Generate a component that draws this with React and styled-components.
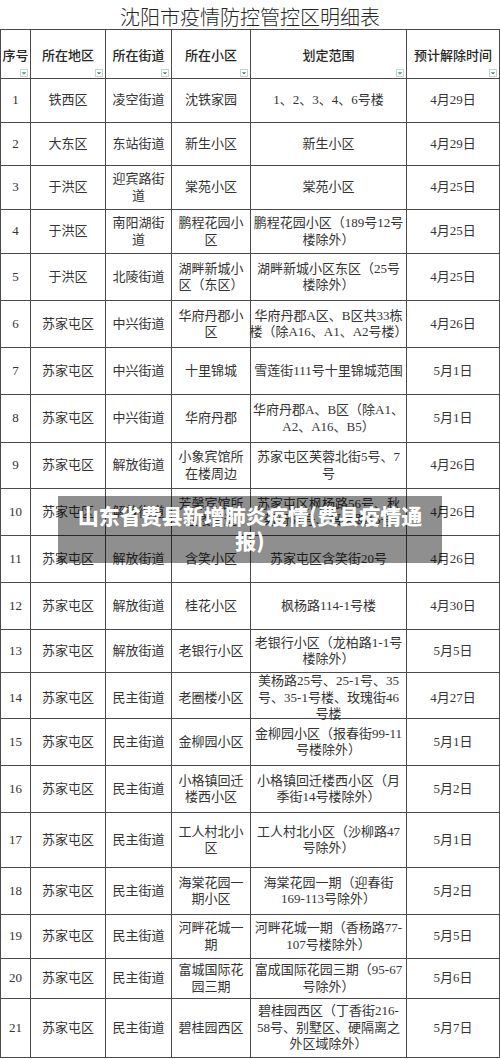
import React from 'react';
import styled, { createGlobalStyle } from 'styled-components';

const GlobalStyle = createGlobalStyle`
    body {
        margin: 0;
        background: #ffffff;
        font-family: "Noto Sans CJK SC", "Noto Sans", sans-serif;
    }
`

const columns = '30px 75px 66px 79px 156px 93px'

const headers = ['序号', '所在地区', '所在街道', '所在小区', '划定范围', '预计解除时间']

// [height, no, district, street, community, range, date]
const rows = [
    [44, '1', '铁西区', '凌空街道', '沈铁家园', '1、2、3、4、6号楼', '4月29日'],
    [43, '2', '大东区', '东站街道', '新生小区', '新生小区', '4月29日'],
    [44, '3', '于洪区', '迎宾路街\n道', '棠苑小区', '棠苑小区', '4月25日'],
    [44, '4', '于洪区', '南阳湖街\n道', '鹏程花园小\n区', '鹏程花园小区（189号12号\n楼除外）', '4月25日'],
    [47, '5', '于洪区', '北陵街道', '湖畔新城小\n区（东区）', '湖畔新城小区东区（25号\n楼除外）', '4月25日'],
    [47, '6', '苏家屯区', '中兴街道', '华府丹郡小\n区', '华府丹郡A区、B区共33栋\n楼（除A16、A1、A2号楼）', '4月26日'],
    [47, '7', '苏家屯区', '中兴街道', '十里锦城', '雪莲街111号十里锦城范围', '5月1日'],
    [48, '8', '苏家屯区', '中兴街道', '华府丹郡', '华府丹郡A、B区（除A1、\nA2、A16、B5）', '5月1日'],
    [46, '9', '苏家屯区', '解放街道', '小象宾馆所\n在楼周边', '苏家屯区芙蓉北街5号、7\n号', '4月26日'],
    [47, '10', '苏家屯区', '解放街道', '芳馨宾馆所\n在楼周边', '苏家屯区枫杨路56号、秋\n菊街61号、培植路16号', '4月26日'],
    [47, '11', '苏家屯区', '解放街道', '含笑小区', '苏家屯区含笑街20号', '4月26日'],
    [47, '12', '苏家屯区', '解放街道', '桂花小区', '枫杨路114-1号楼', '4月30日'],
    [43, '13', '苏家屯区', '解放街道', '老银行小区', '老银行小区（龙柏路1-1号\n楼除外）', '5月5日'],
    [46, '14', '苏家屯区', '民主街道', '老圈楼小区', '美杨路25号、25-1号、35\n号、35-1号楼、玫瑰街46\n号楼', '4月27日'],
    [47, '15', '苏家屯区', '民主街道', '金柳园小区', '金柳园小区（报春街99-11\n号楼除外）', '5月1日'],
    [47, '16', '苏家屯区', '民主街道', '小格镇回迁\n楼西小区', '小格镇回迁楼西小区（月\n季街14号楼除外）', '5月2日'],
    [55, '17', '苏家屯区', '民主街道', '工人村北小\n区', '工人村北小区（沙柳路47\n号除外）', '5月1日'],
    [47, '18', '苏家屯区', '民主街道', '海棠花园一\n期小区', '海棠花园一期（迎春街\n169-113号除外）', '5月2日'],
    [44, '19', '苏家屯区', '民主街道', '河畔花城一\n期', '河畔花城一期（香杨路77-\n107号楼除外）', '5月5日'],
    [40, '20', '苏家屯区', '民主街道', '富城国际花\n园三期', '富成国际花园三期（95-67\n号除外）', '5月6日'],
    [59, '21', '苏家屯区', '民主街道', '碧桂园西区', '碧桂园西区（丁香街216-\n58号、别墅区、硬隔离之\n外区域除外）', '5月7日'],
]

const FilterIcon = () => (
    <svg width="8" height="8" viewBox="0 0 8 8">
        <rect x="0.5" y="0.5" width="7" height="7" fill="#ffffff" stroke="#cfcfcf" />
        <path d="M1.8 3.2 L6.2 3.2 L4 5.6 Z" fill="#279466" />
    </svg>
)

const App = () => {
    return (
        <Page>
            <GlobalStyle />
            <Title>沈阳市疫情防控管控区明细表</Title>
            <Table>
                <HeaderRow>
                    {headers.map((h) => (
                        <HeaderCell key={h}>
                            {h}
                            <FilterButton><FilterIcon /></FilterButton>
                        </HeaderCell>
                    ))}
                </HeaderRow>
                {rows.map(([height, ...cells]) => (
                    <Row key={cells[0]} $height={height}>
                        {cells.map((text, i) => (
                            <Cell key={i}>
                                {text.split('\n').map((line, j) => (
                                    <Line key={j} $tight={line.length > 15}>{line}</Line>
                                ))}
                            </Cell>
                        ))}
                    </Row>
                ))}
            </Table>
            <Banner>
                山东省费县新增肺炎疫情(费县疫情通<br />报)
            </Banner>
        </Page>
    );
}

const Page = styled.div`
    position: relative;
    width: 500px;
    height: 1059px;
    overflow: hidden;
    background: #ffffff;
`

const Title = styled.div`
    height: 29px;
    line-height: 34px;
    text-align: center;
    font-size: 20px;
    font-weight: 300;
    color: #262626;
`

const Table = styled.div`
    width: 500px;
    box-sizing: border-box;
    border-top: 1px solid #4a4a4a;
    border-left: 1px solid #4a4a4a;
`

const HeaderRow = styled.div`
    display: grid;
    grid-template-columns: ${columns};
    height: 49px;
    box-sizing: border-box;
    border-bottom: 1px solid #4a4a4a;
`

const HeaderCell = styled.div`
    position: relative;
    display: flex;
    align-items: center;
    justify-content: center;
    box-sizing: border-box;
    border-right: 1px solid #4a4a4a;
    font-size: 13px;
    font-weight: 500;
    color: #262626;
    white-space: nowrap;
`

const FilterButton = styled.span`
    position: absolute;
    right: 2px;
    bottom: 1px;
    width: 8px;
    height: 8px;
    display: flex;
`

const Row = styled.div`
    display: grid;
    grid-template-columns: ${columns};
    height: ${(p) => p.$height}px;
    box-sizing: border-box;
    border-bottom: 1px solid #4a4a4a;
`

const Cell = styled.div`
    display: flex;
    flex-direction: column;
    align-items: center;
    justify-content: center;
    box-sizing: border-box;
    border-right: 1px solid #4a4a4a;
    font-family: "Liberation Serif", "Noto Sans CJK SC", serif;
    font-size: 13px;
    line-height: 16.5px;
    color: #333333;
    min-width: 0;
`

const Line = styled.span`
    display: block;
    white-space: nowrap;
    letter-spacing: ${(p) => (p.$tight ? '-0.3px' : '0')};
`

const Banner = styled.div`
    position: absolute;
    left: 58px;
    top: 496px;
    width: 384px;
    height: 67px;
    box-sizing: border-box;
    padding-top: 7px;
    background: rgba(0, 0, 0, 0.44);
    color: #ffffff;
    text-align: center;
    font-size: 21px;
    line-height: 25px;
    font-weight: 900;
    white-space: nowrap;
    text-shadow: 0 0 1px rgba(0, 0, 0, 0.3);
`

export default App;
